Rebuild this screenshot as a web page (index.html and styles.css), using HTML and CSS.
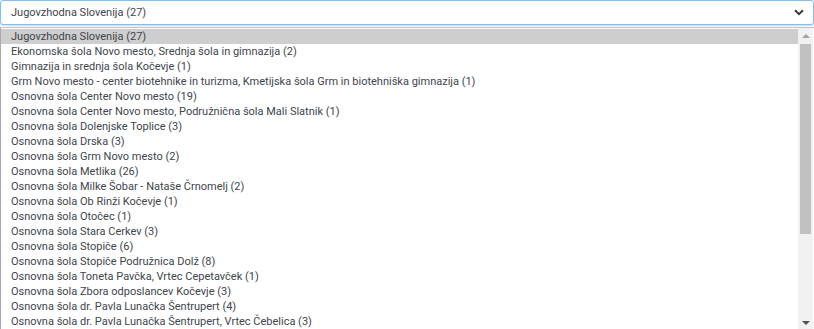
FILE: index.html
```html
<!DOCTYPE html>
<html lang="sl">
<head>
<meta charset="UTF-8">
<title>Izbira šole</title>
<link rel="stylesheet" href="styles.css">
</head>
<body>

<div class="picker">
    <div class="select">
        <span>Jugovzhodna Slovenija (27)</span>
        <svg class="chevron" width="10" height="7" viewBox="0 0 10 7"><path d="M1 1.2 L5 5.2 L9 1.2" fill="none" stroke="#343a40" stroke-width="2"/></svg>
    </div>
    <div class="listbox">
        <div class="options">
            <div class="option selected">Jugovzhodna Slovenija (27)</div>
            <div class="option">Ekonomska šola Novo mesto, Srednja šola in gimnazija (2)</div>
            <div class="option">Gimnazija in srednja šola Kočevje (1)</div>
            <div class="option">Grm Novo mesto - center biotehnike in turizma, Kmetijska šola Grm in biotehniška gimnazija (1)</div>
            <div class="option">Osnovna šola Center Novo mesto (19)</div>
            <div class="option">Osnovna šola Center Novo mesto, Podružnična šola Mali Slatnik (1)</div>
            <div class="option">Osnovna šola Dolenjske Toplice (3)</div>
            <div class="option">Osnovna šola Drska (3)</div>
            <div class="option">Osnovna šola Grm Novo mesto (2)</div>
            <div class="option">Osnovna šola Metlika (26)</div>
            <div class="option">Osnovna šola Milke Šobar - Nataše Črnomelj (2)</div>
            <div class="option">Osnovna šola Ob Rinži Kočevje (1)</div>
            <div class="option">Osnovna šola Otočec (1)</div>
            <div class="option">Osnovna šola Stara Cerkev (3)</div>
            <div class="option">Osnovna šola Stopiče (6)</div>
            <div class="option">Osnovna šola Stopiče Podružnica Dolž (8)</div>
            <div class="option">Osnovna šola Toneta Pavčka, Vrtec Cepetavček (1)</div>
            <div class="option">Osnovna šola Zbora odposlancev Kočevje (3)</div>
            <div class="option">Osnovna šola dr. Pavla Lunačka Šentrupert (4)</div>
            <div class="option">Osnovna šola dr. Pavla Lunačka Šentrupert, Vrtec Čebelica (3)</div>
        </div>
        <div class="scrollbar">
            <div class="arrow up"></div>
            <div class="track">
                <div class="thumb"></div>
            </div>
            <div class="arrow down"></div>
        </div>
    </div>
</div>

</body>
</html>
```

FILE: styles.css
```css
body {
    margin: 0;
    padding: 0;
    height: 329px;
    overflow: hidden;
    background-color: #fff;
    font-family: Roboto, "Noto Sans", sans-serif;
    font-size: 11px;
    color: #40454b;
}

.picker {
    display: flex;
    flex-direction: column;
    gap: 2px;
}

.select {
    height: 23px;
    display: flex;
    align-items: center;
    justify-content: space-between;
    padding: 0 9px 0 10px;
    border: 1px solid #80bdff;
    border-radius: 3px;
    box-shadow: 0 1px 2px rgba(0, 123, 255, 0.25);
    background-color: #fff;
}

.listbox {
    height: 302px;
    display: flex;
    border-left: 1px solid #a9a9a9;
    border-top: 1px solid #c4c4c4;
}

.options {
    flex: 1;
    padding-top: 1px;
}

.option {
    height: 15px;
    line-height: 15px;
    padding-left: 10px;
    white-space: nowrap;
}
.option.selected {
    background-color: #cecece;
}

.scrollbar {
    width: 15px;
    margin-right: 1px;
    display: flex;
    flex-direction: column;
    background-color: #f1f1f1;
}
.arrow {
    height: 15px;
    display: flex;
    align-items: center;
    justify-content: center;
}
.arrow.up::before {
    content: "";
    border-left: 4px solid transparent;
    border-right: 4px solid transparent;
    border-bottom: 4px solid #a3a3a3;
}
.arrow.down::before {
    content: "";
    border-left: 4px solid transparent;
    border-right: 4px solid transparent;
    border-top: 4px solid #505050;
}
.track {
    flex: 1;
    padding: 1px 2px;
}
.thumb {
    height: 190px;
    background-color: #c1c1c1;
}
```
